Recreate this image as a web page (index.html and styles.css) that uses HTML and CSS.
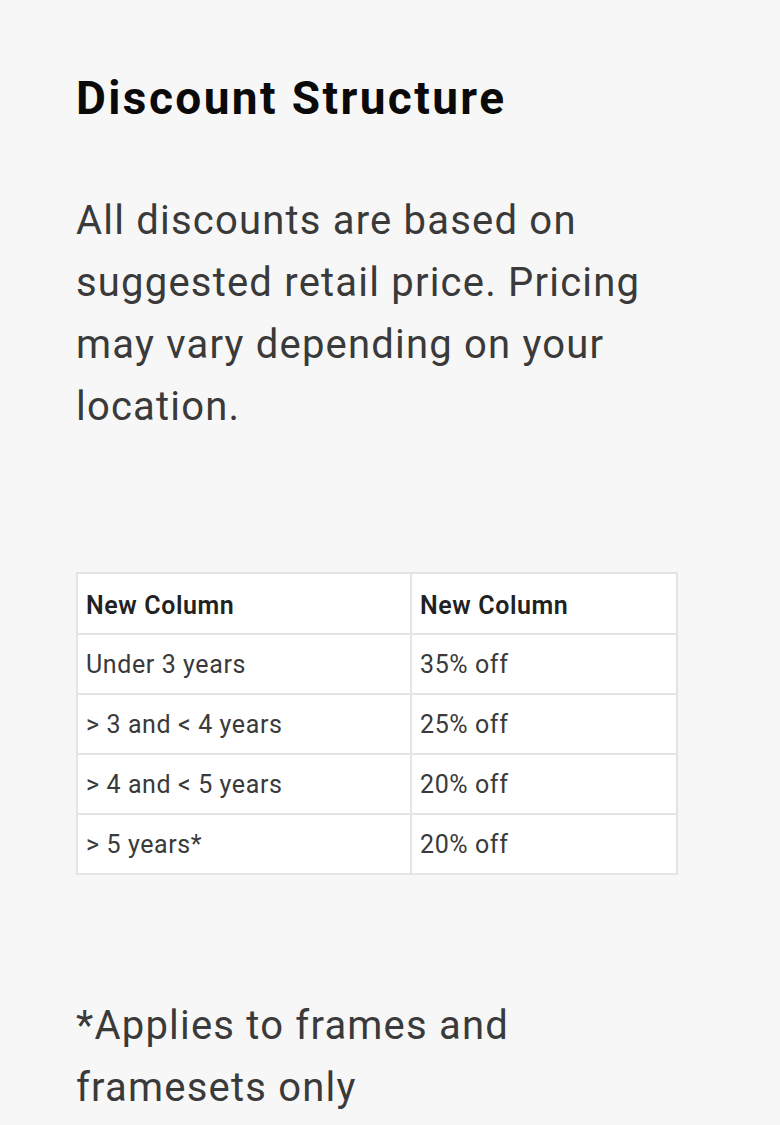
FILE: index.html
```html
<!DOCTYPE html>
<html lang="en">
<head>
<meta charset="utf-8">
<link rel="stylesheet" href="styles.css">
</head>
<body>
<main class="page">
  <h1 class="title">Discount Structure</h1>
  <p class="lead">All discounts are based on suggested retail price. Pricing may vary depending on your location.</p>
  <table class="discounts">
    <thead>
      <tr><th>New Column</th><th>New Column</th></tr>
    </thead>
    <tbody>
      <tr><td>Under 3 years</td><td>35% off</td></tr>
      <tr><td>&gt; 3 and &lt; 4 years</td><td>25% off</td></tr>
      <tr><td>&gt; 4 and &lt; 5 years</td><td>20% off</td></tr>
      <tr><td>&gt; 5 years*</td><td>20% off</td></tr>
    </tbody>
  </table>
  <p class="note">*Applies to frames and framesets only</p>
</main>
</body>
</html>
```
FILE: styles.css
```css
html, body {
  margin: 0;
  padding: 0;
  background: #f7f7f7;
}
body {
  font-family: Roboto, "Liberation Sans", sans-serif;
  color: #3a3a3a;
}
.page {
  padding: 70px 76px 0 76px;
}
.title {
  margin: 0;
  font-size: 46px;
  line-height: 56px;
  font-weight: 700;
  color: #0a0a0a;
  letter-spacing: 2.4px;
}
.lead {
  margin: 64px 0 0 0;
  font-size: 40px;
  line-height: 62px;
  letter-spacing: 1.2px;
  width: 620px;
}
.discounts {
  margin-top: 134px;
  width: 602px;
  border-collapse: collapse;
  background: #ffffff;
  font-size: 25px;
  letter-spacing: 0.6px;
}
.discounts th, .discounts td {
  border: 2px solid #e4e4e4;
  text-align: left;
  padding: 0 8px;
  height: 58px;
}
.discounts th {
  font-weight: 600;
  color: #222;
  height: 55px;
  padding-top: 4px;
}
.discounts th:first-child, .discounts td:first-child {
  width: 316px;
}
.note {
  margin: 120px 0 0 0;
  font-size: 40px;
  line-height: 62px;
  letter-spacing: 1.2px;
  width: 560px;
}
```
